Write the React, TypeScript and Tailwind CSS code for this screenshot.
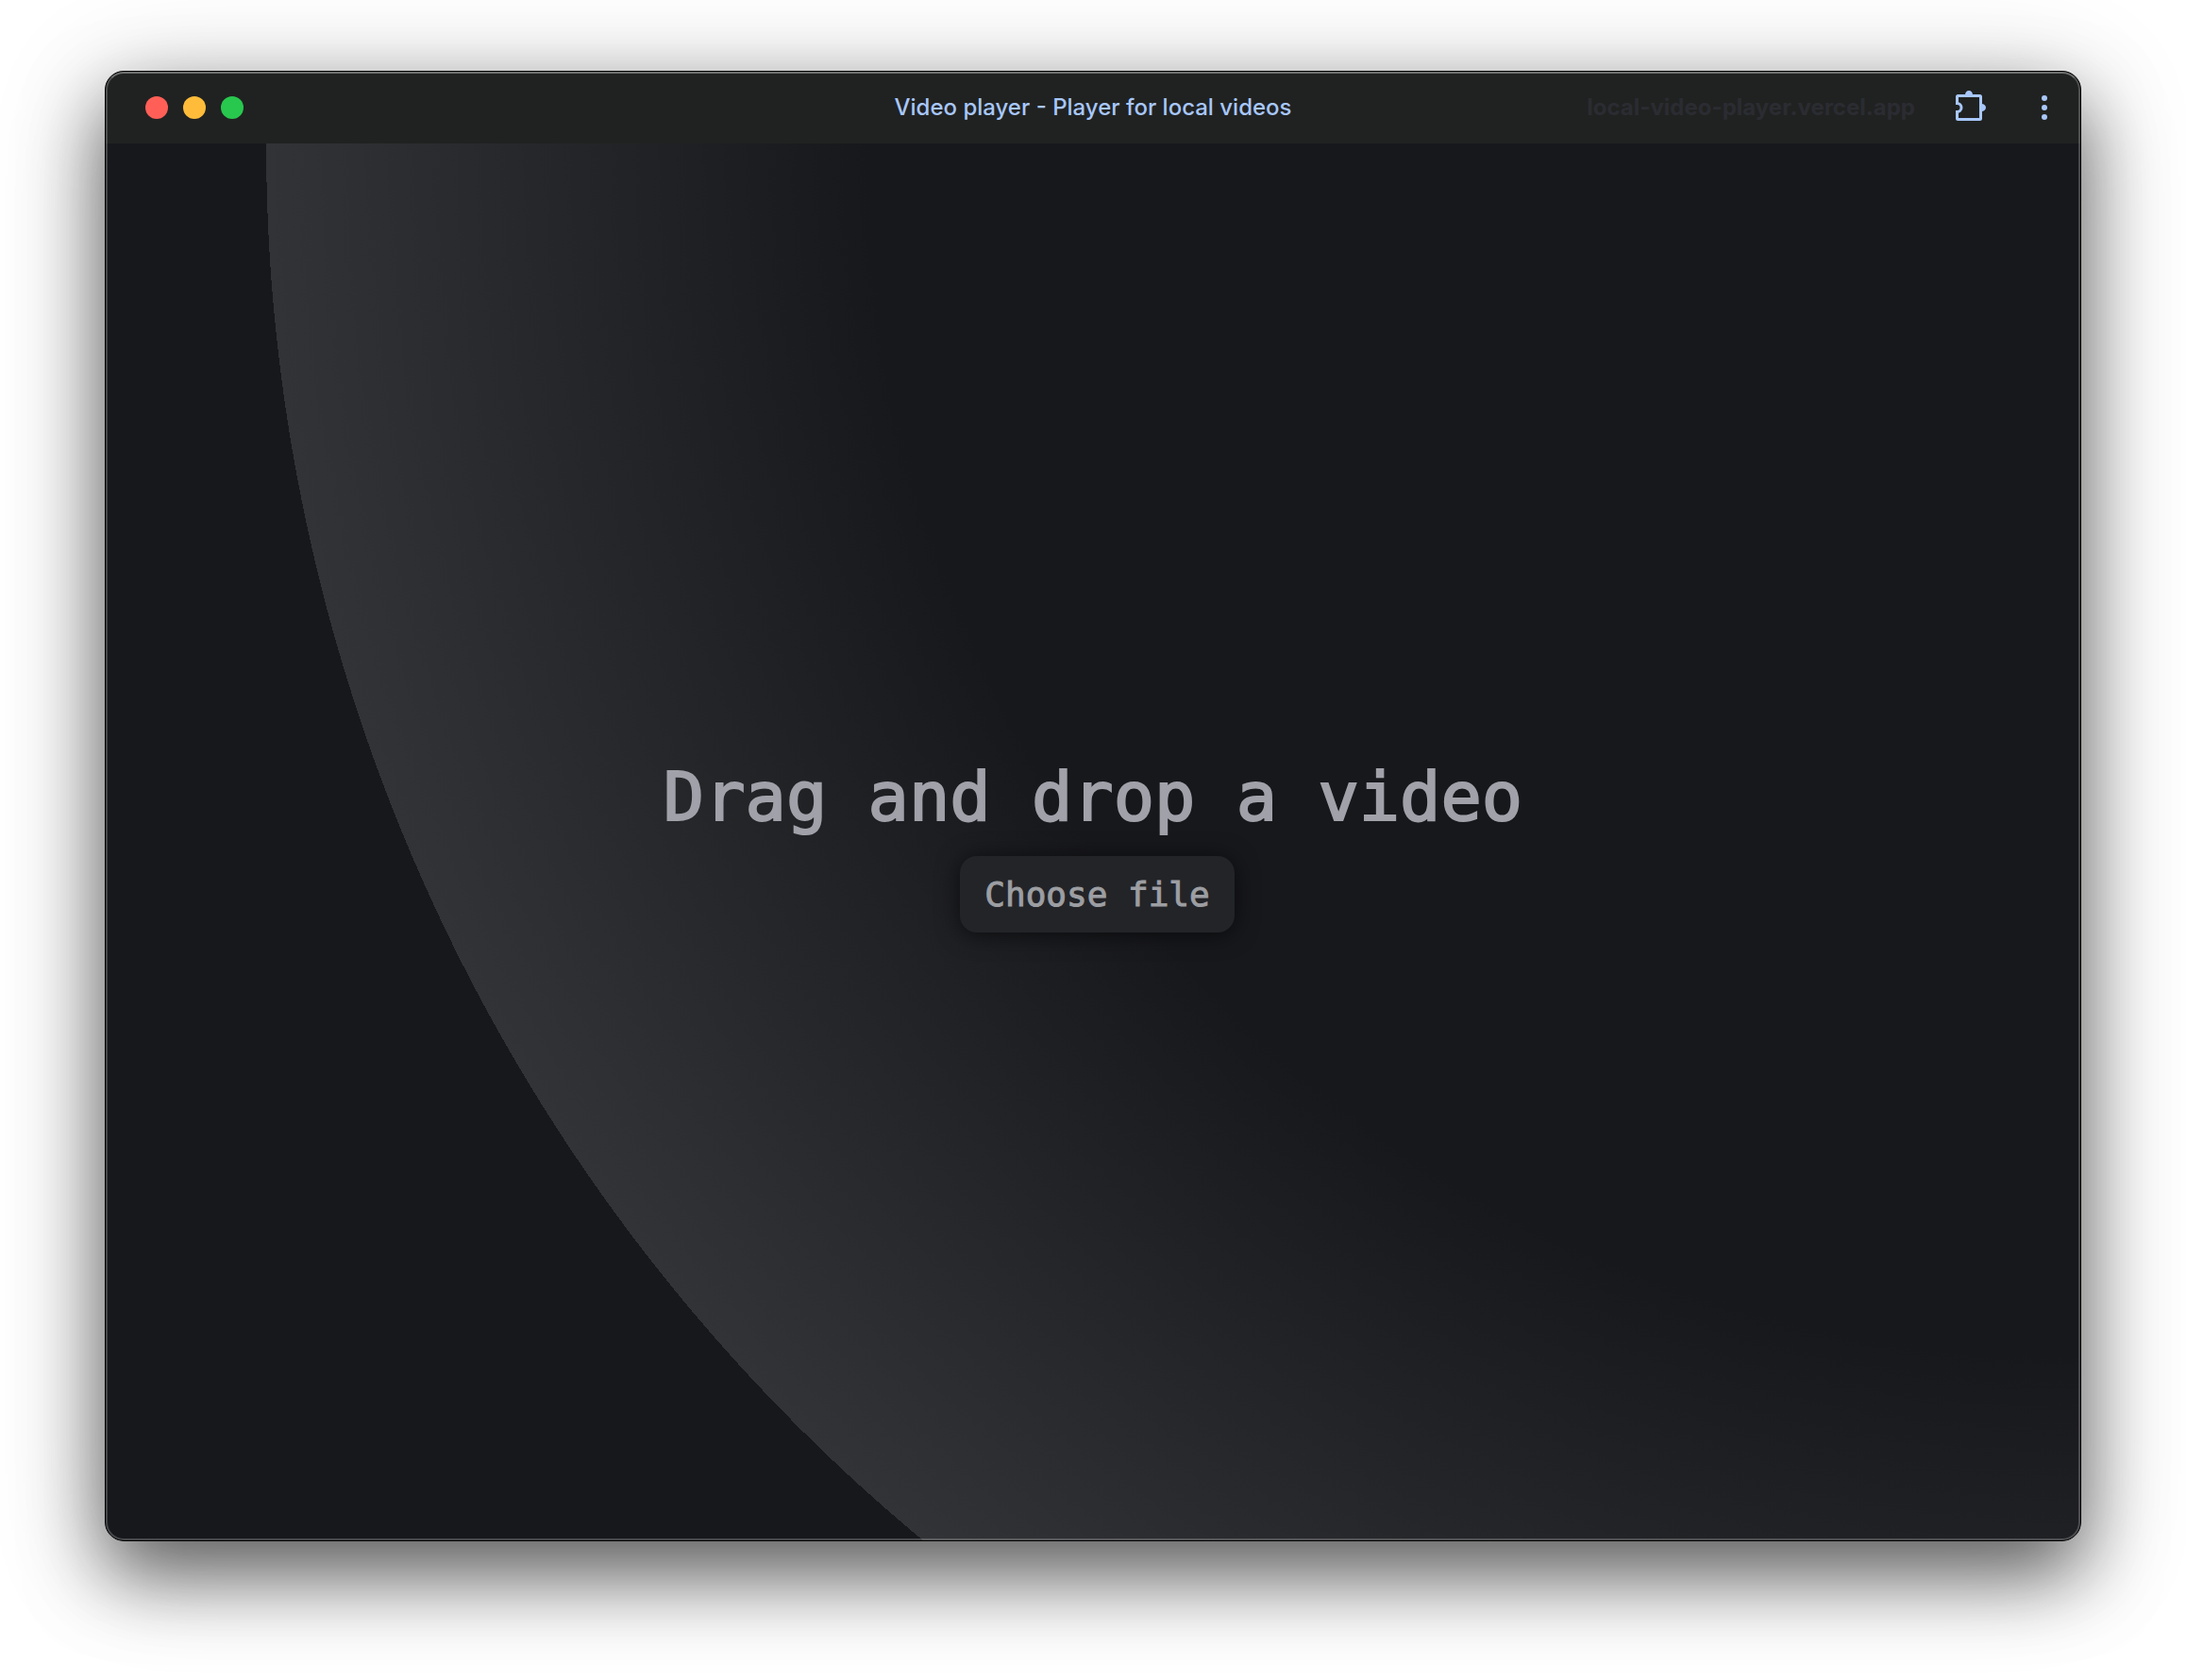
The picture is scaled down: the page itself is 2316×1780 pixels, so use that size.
export default function App() {
  return (
    <div className="h-screen overflow-hidden bg-white px-[111px] pt-[75px] pb-[147px] font-['Inter',sans-serif]">
      <div className="h-full rounded-[20px] shadow-[0_36px_80px_rgba(0,0,0,0.54),0_20px_120px_rgba(0,0,0,0.24)]">
        <div className="relative flex h-full flex-col overflow-hidden rounded-[20px] border border-black bg-[#17181c]">
          <header className="grid h-[76px] shrink-0 grid-cols-[1fr_auto_1fr] items-center bg-[#202221] px-[42px]">
            <div className="flex gap-4">
              <button type="button" aria-label="Close" className="size-6 rounded-full bg-[#ff5f57]" />
              <button type="button" aria-label="Minimize" className="size-6 rounded-full bg-[#febc3a]" />
              <button type="button" aria-label="Zoom" className="size-6 rounded-full bg-[#28c84e]" />
            </div>
            <h1 className="text-[24px] leading-8 font-medium text-[#a8c7fa]">
              Video player - Player for local videos
            </h1>
            <div className="-mr-[19px] flex items-center justify-end">
              <span className="mr-[39px] text-[24px] leading-8 font-bold text-[#2b2c32]">
                local-video-player.vercel.app
              </span>
              <button type="button" aria-label="Extensions" className="mr-[47px] text-[#a8c7fa]">
                <svg width="36" height="40" viewBox="0 0 36 40" fill="none">
                  <path
                    d="M6.500 7.500H29.500A1 1 0 0 1 30.500 8.500V31.500A1 1 0 0 1 29.500 32.500H6.500A1 1 0 0 1 5.500 31.500V24.500A4.500 4.500 0 0 0 5.500 15.500V8.500A1 1 0 0 1 6.500 7.500Z"
                    stroke="currentColor"
                    strokeWidth="3"
                  />
                  <path d="M14 6.500a4 4.500 0 0 1 8 0zM31.500 16a4.500 4 0 0 1 0 8z" fill="currentColor" />
                </svg>
              </button>
              <button type="button" aria-label="Menu" className="text-[#a8c7fa]">
                <svg width="30" height="40" viewBox="0 0 30 40" fill="currentColor">
                  <circle cx="15" cy="10" r="3" />
                  <circle cx="15" cy="20" r="3" />
                  <circle cx="15" cy="30" r="3" />
                </svg>
              </button>
            </div>
          </header>
          <main className="flex flex-1 flex-col items-center justify-center bg-[radial-gradient(circle_at_top_right,#17181c_50%,#323336_75%,#17181c_75%)] pt-[3px] font-['DejaVu_Sans_Mono','Liberation_Mono',monospace]">
            <h2 className="text-[72px] leading-[108px] text-[#a1a1aa] [-webkit-text-stroke:2px_#a1a1aa]">
              Drag and drop a video
            </h2>
            <button
              type="button"
              className="my-[9px] ml-[9px] rounded-[18px] bg-[#232428] px-[26px] text-[36px] leading-[81px] text-[#9c9ea2] shadow-[0_2px_24px_rgba(0,0,0,0.6)] [-webkit-text-stroke:1px_#9c9ea2]"
            >
              Choose file
            </button>
          </main>
          <div className="pointer-events-none absolute inset-0 rounded-[19px] border-2 border-white/20 border-t-white/35" />
        </div>
      </div>
    </div>
  );
}
